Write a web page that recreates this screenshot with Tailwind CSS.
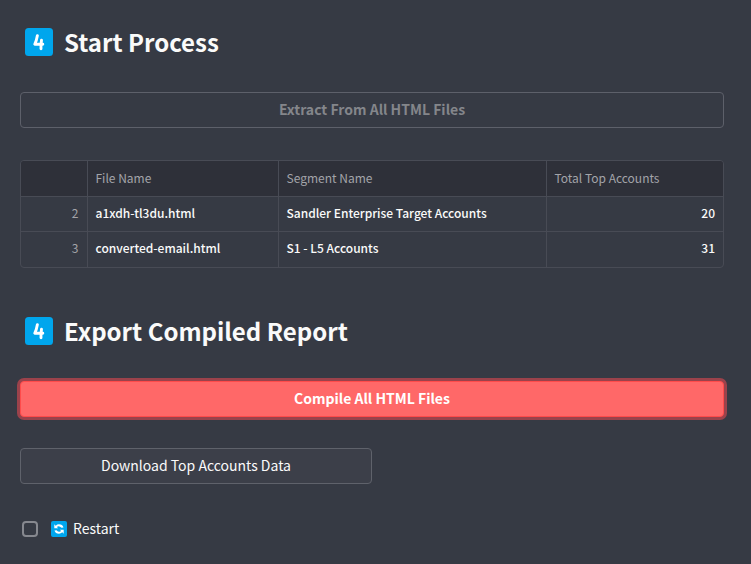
<!DOCTYPE html>
<html lang="en">
<head>
<meta charset="utf-8">
<meta name="viewport" content="width=device-width, initial-scale=1">
<title>Report Export</title>
<script src="https://cdn.jsdelivr.net/npm/@tailwindcss/browser@4"></script>
</head>
<body class="flex min-h-screen flex-col bg-[#363a44] font-['Noto_Sans_CJK_SC','Source_Sans_Pro',sans-serif] text-[14px] leading-6 text-[#fafafa]">
<main class="flex-1 pt-6 pr-[27px] pl-5">
  <section>
    <h2 class="flex h-9 items-center gap-[11px] pl-[5px] text-2xl leading-9 font-bold">
      <svg class="size-7 shrink-0" viewBox="0 0 28 28" aria-hidden="true"><rect width="28" height="28" rx="3.5" fill="#00a6ed"/><path d="M12.400 7.600 Q11.600 12.500 9.800 16.200 H17.800 M16.500 12.300 Q15.800 16.500 16 20.700" fill="none" stroke="#fff" stroke-width="2.900" stroke-linecap="round" stroke-linejoin="round"/></svg>
      <span>Start Process</span>
    </h2>
    <button type="button" disabled class="mt-8 flex h-9 w-full items-center justify-center rounded border border-[#5d606a] pb-0.5 font-bold text-[#84868b]">Extract From All HTML Files</button>
    <div class="mt-8 overflow-hidden rounded border border-[#484b55]">
      <table class="w-full table-fixed border-collapse text-left text-[12px] leading-5">
        <colgroup><col class="w-[66px]"><col class="w-[191px]"><col class="w-[268px]"><col></colgroup>
        <thead class="bg-[#2e3039] text-[#a3a4a9]">
          <tr class="h-[35px] border-b border-[#484b55]">
            <td class="border-r border-[#484b55]"></td>
            <th scope="col" class="border-r border-[#484b55] px-2 font-normal">File Name</th>
            <th scope="col" class="border-r border-[#484b55] px-2 font-normal">Segment Name</th>
            <th scope="col" class="px-2 font-normal">Total Top Accounts</th>
          </tr>
        </thead>
        <tbody class="font-medium">
          <tr class="h-[35px] border-b border-[#484b55]">
            <th scope="row" class="border-r border-[#484b55] px-2 pb-0.5 text-right font-normal text-[#a3a4a9]">2</th>
            <td class="border-r border-[#484b55] px-2 pb-0.5">a1xdh-tl3du.html</td>
            <td class="border-r border-[#484b55] px-2 pb-0.5">Sandler Enterprise Target Accounts</td>
            <td class="px-2 pb-0.5 text-right">20</td>
          </tr>
          <tr class="h-9">
            <th scope="row" class="border-r border-[#484b55] px-2 pb-0.5 text-right font-normal text-[#a3a4a9]">3</th>
            <td class="border-r border-[#484b55] px-2 pb-0.5">converted-email.html</td>
            <td class="border-r border-[#484b55] px-2 pb-0.5">S1 - L5 Accounts</td>
            <td class="px-2 pb-0.5 text-right">31</td>
          </tr>
        </tbody>
      </table>
    </div>
  </section>
  <section class="mt-[45px]">
    <h2 class="flex h-9 items-center gap-[11px] pl-[5px] text-2xl leading-9 font-bold">
      <svg class="size-7 shrink-0" viewBox="0 0 28 28" aria-hidden="true"><rect width="28" height="28" rx="3.500" fill="#00a6ed"/><path d="M12.400 7.600 Q11.600 12.500 9.800 16.200 H17.800 M16.500 12.300 Q15.800 16.500 16 20.700" fill="none" stroke="#fff" stroke-width="2.900" stroke-linecap="round" stroke-linejoin="round"/></svg>
      <span>Export Compiled Report</span>
    </h2>
    <button type="button" class="mt-8 flex h-9 w-full items-center justify-center rounded border border-[#ff4b4b] bg-[#ff6868] pb-0.5 font-bold text-white ring-3 ring-[#9b424b]">Compile All HTML Files</button>
    <button type="button" class="mt-[31px] flex h-9 w-1/2 items-center justify-center rounded border border-[#5f626b] bg-[#3c3f49] pb-0.5">Download Top Accounts Data</button>
    <label class="mt-8 flex w-fit items-center pl-[2px]">
      <input type="checkbox" class="size-4 appearance-none rounded border-2 border-[#86888f] checked:border-[#ff4b4b] checked:bg-[#ff4b4b]">
      <svg class="ml-[13px] size-4" viewBox="0 0 16 16" aria-hidden="true"><rect width="16" height="16" rx="2" fill="#00a6ed"/><path d="M3.300 3.300 V7.300 H7.200 L5.800 6 Q8 4.200 10.500 6.800 L12.500 6.500 Q11.500 3.300 8 3.300 Q6.200 3.300 4.700 4.700Z M12.700 12.700 V8.700 H8.800 L10.200 10 Q8 11.800 5.500 9.200 L3.500 9.500 Q4.500 12.700 8 12.700 Q9.800 12.700 11.300 11.300Z" fill="#fff"/></svg>
      <span class="ml-[6px] pb-0.5">Restart</span>
    </label>
  </section>
</main>
</body>
</html>
